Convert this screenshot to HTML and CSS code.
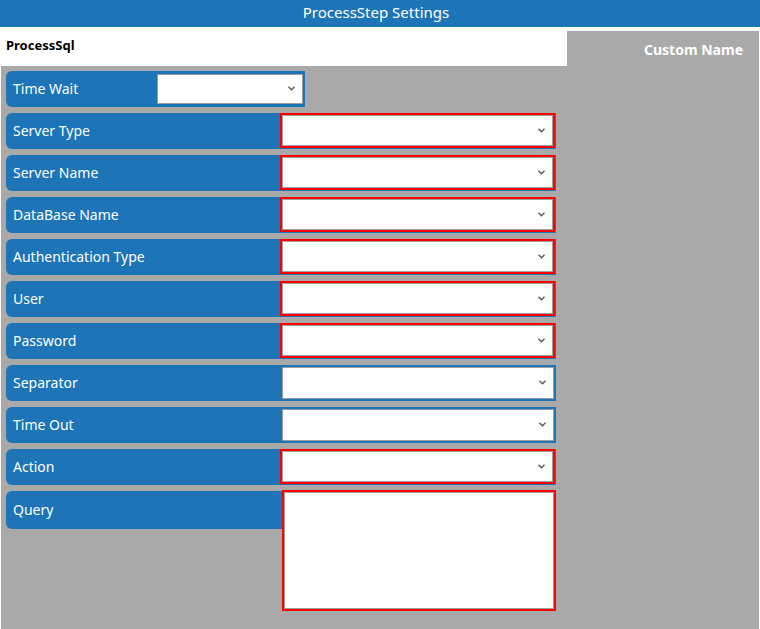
FILE: index.html
```html
<!DOCTYPE html>
<html>
<head>
<meta charset="utf-8">
<link rel="stylesheet" href="styles.css">
</head>
<body>
<div class="header">ProcessStep Settings</div>
<div class="topbar">
  <div class="step-name">ProcessSql</div>
  <div class="tab">Custom Name</div>
</div>
<div class="panel">
  <div class="row short">
    <div class="label short-label">Time Wait</div>
    <div class="select small"><span class="chev"><svg width="7" height="5" viewBox="0 0 7 5"><path d="M0.5 0.8 L3.5 3.8 L6.5 0.8" fill="none" stroke="#555" stroke-width="1.3"/></svg></span></div>
  </div>
  <div class="row">
    <div class="label">Server Type</div>
    <div class="field invalid"><div class="select"><span class="chev"><svg width="7" height="5" viewBox="0 0 7 5"><path d="M0.5 0.8 L3.5 3.8 L6.5 0.8" fill="none" stroke="#555" stroke-width="1.3"/></svg></span></div></div>
  </div>
  <div class="row">
    <div class="label">Server Name</div>
    <div class="field invalid"><div class="select"><span class="chev"><svg width="7" height="5" viewBox="0 0 7 5"><path d="M0.5 0.8 L3.5 3.8 L6.5 0.8" fill="none" stroke="#555" stroke-width="1.3"/></svg></span></div></div>
  </div>
  <div class="row">
    <div class="label">DataBase Name</div>
    <div class="field invalid"><div class="select"><span class="chev"><svg width="7" height="5" viewBox="0 0 7 5"><path d="M0.5 0.8 L3.5 3.8 L6.5 0.8" fill="none" stroke="#555" stroke-width="1.3"/></svg></span></div></div>
  </div>
  <div class="row">
    <div class="label">Authentication Type</div>
    <div class="field invalid"><div class="select"><span class="chev"><svg width="7" height="5" viewBox="0 0 7 5"><path d="M0.5 0.8 L3.5 3.8 L6.5 0.8" fill="none" stroke="#555" stroke-width="1.3"/></svg></span></div></div>
  </div>
  <div class="row">
    <div class="label">User</div>
    <div class="field invalid"><div class="select"><span class="chev"><svg width="7" height="5" viewBox="0 0 7 5"><path d="M0.5 0.8 L3.5 3.8 L6.5 0.8" fill="none" stroke="#555" stroke-width="1.3"/></svg></span></div></div>
  </div>
  <div class="row">
    <div class="label">Password</div>
    <div class="field invalid"><div class="select"><span class="chev"><svg width="7" height="5" viewBox="0 0 7 5"><path d="M0.5 0.8 L3.5 3.8 L6.5 0.8" fill="none" stroke="#555" stroke-width="1.3"/></svg></span></div></div>
  </div>
  <div class="row">
    <div class="label">Separator</div>
    <div class="field"><div class="select"><span class="chev"><svg width="7" height="5" viewBox="0 0 7 5"><path d="M0.5 0.8 L3.5 3.8 L6.5 0.8" fill="none" stroke="#555" stroke-width="1.3"/></svg></span></div></div>
  </div>
  <div class="row">
    <div class="label">Time Out</div>
    <div class="field"><div class="select"><span class="chev"><svg width="7" height="5" viewBox="0 0 7 5"><path d="M0.5 0.8 L3.5 3.8 L6.5 0.8" fill="none" stroke="#555" stroke-width="1.3"/></svg></span></div></div>
  </div>
  <div class="row">
    <div class="label">Action</div>
    <div class="field invalid"><div class="select"><span class="chev"><svg width="7" height="5" viewBox="0 0 7 5"><path d="M0.5 0.8 L3.5 3.8 L6.5 0.8" fill="none" stroke="#555" stroke-width="1.3"/></svg></span></div></div>
  </div>
  <div class="query-row">
    <div class="label query-label">Query</div>
    <div class="textarea-wrap"><div class="textarea"></div></div>
  </div>
</div>
</body>
</html>
```
FILE: styles.css
```css
html, body {
  margin: 0;
  padding: 0;
  background: #ffffff;
  font-family: "Noto Sans", "Open Sans", sans-serif;
}
.header {
  height: 27px;
  background: #1d74b7;
  color: #ffffff;
  font-size: 15px;
  line-height: 24px;
  text-align: center;
  padding-right: 8px;
}
.topbar {
  height: 39px;
  display: flex;
  justify-content: space-between;
  align-items: flex-start;
}
.step-name {
  padding: 9px 0 0 6px;
  font-size: 13px;
  font-weight: 700;
  color: #000000;
}
.tab {
  margin-top: 4px;
  margin-right: 1px;
  width: 192px;
  height: 35px;
  background: #a9a9a9;
  color: #ffffff;
  font-size: 14px;
  font-weight: 700;
  text-align: right;
  box-sizing: border-box;
  padding: 9px 16px 0 0;
}
.panel {
  margin: 0 1px;
  height: 563px;
  background: #a9a9a9;
  box-sizing: border-box;
  padding: 5px 0 0 5px;
  display: flex;
  flex-direction: column;
  gap: 6px;
}
.row {
  display: flex;
  width: 550px;
  height: 36px;
  background: #1d74b7;
  border-radius: 6px 0 0 6px;
}
.row.short {
  width: 299px;
}
.label {
  width: 274px;
  flex: none;
  box-sizing: border-box;
  padding: 0 0 1px 7px;
  color: #ffffff;
  font-size: 14px;
  display: flex;
  align-items: center;
}
.short-label {
  width: 151px;
}
.field {
  flex: 1;
  display: flex;
  box-sizing: border-box;
  padding: 2px 2px 2px 2px;
}
.field.invalid {
  padding: 0 1px 0 0;
}
.field.invalid .select {
  border: 1px solid #a0a0a0;
  outline: 2px solid #ff0000;
  outline-offset: 0;
  margin: 2px 2px 3px 2px;
}
.select {
  flex: 1;
  position: relative;
  background: #ffffff;
  border: 1px solid #9a9a9a;
}
.select.small {
  flex: none;
  width: 144px;
  margin: 3px 2px 3px 0;
}
.chev {
  position: absolute;
  right: 7px;
  top: 50%;
  margin-top: -4px;
  line-height: 0;
}
.query-row {
  display: flex;
  align-items: flex-start;
  width: 550px;
}
.query-label {
  width: 276px;
  height: 38px;
  background: #1d74b7;
  border-radius: 6px 0 0 6px;
}
.textarea-wrap {
  width: 274px;
  height: 121px;
  box-sizing: border-box;
  border: 2px solid #ff0000;
  margin-top: -1px;
}
.textarea {
  height: 100%;
  box-sizing: border-box;
  background: #ffffff;
  border: 1px solid #a0a0a0;
}
```
